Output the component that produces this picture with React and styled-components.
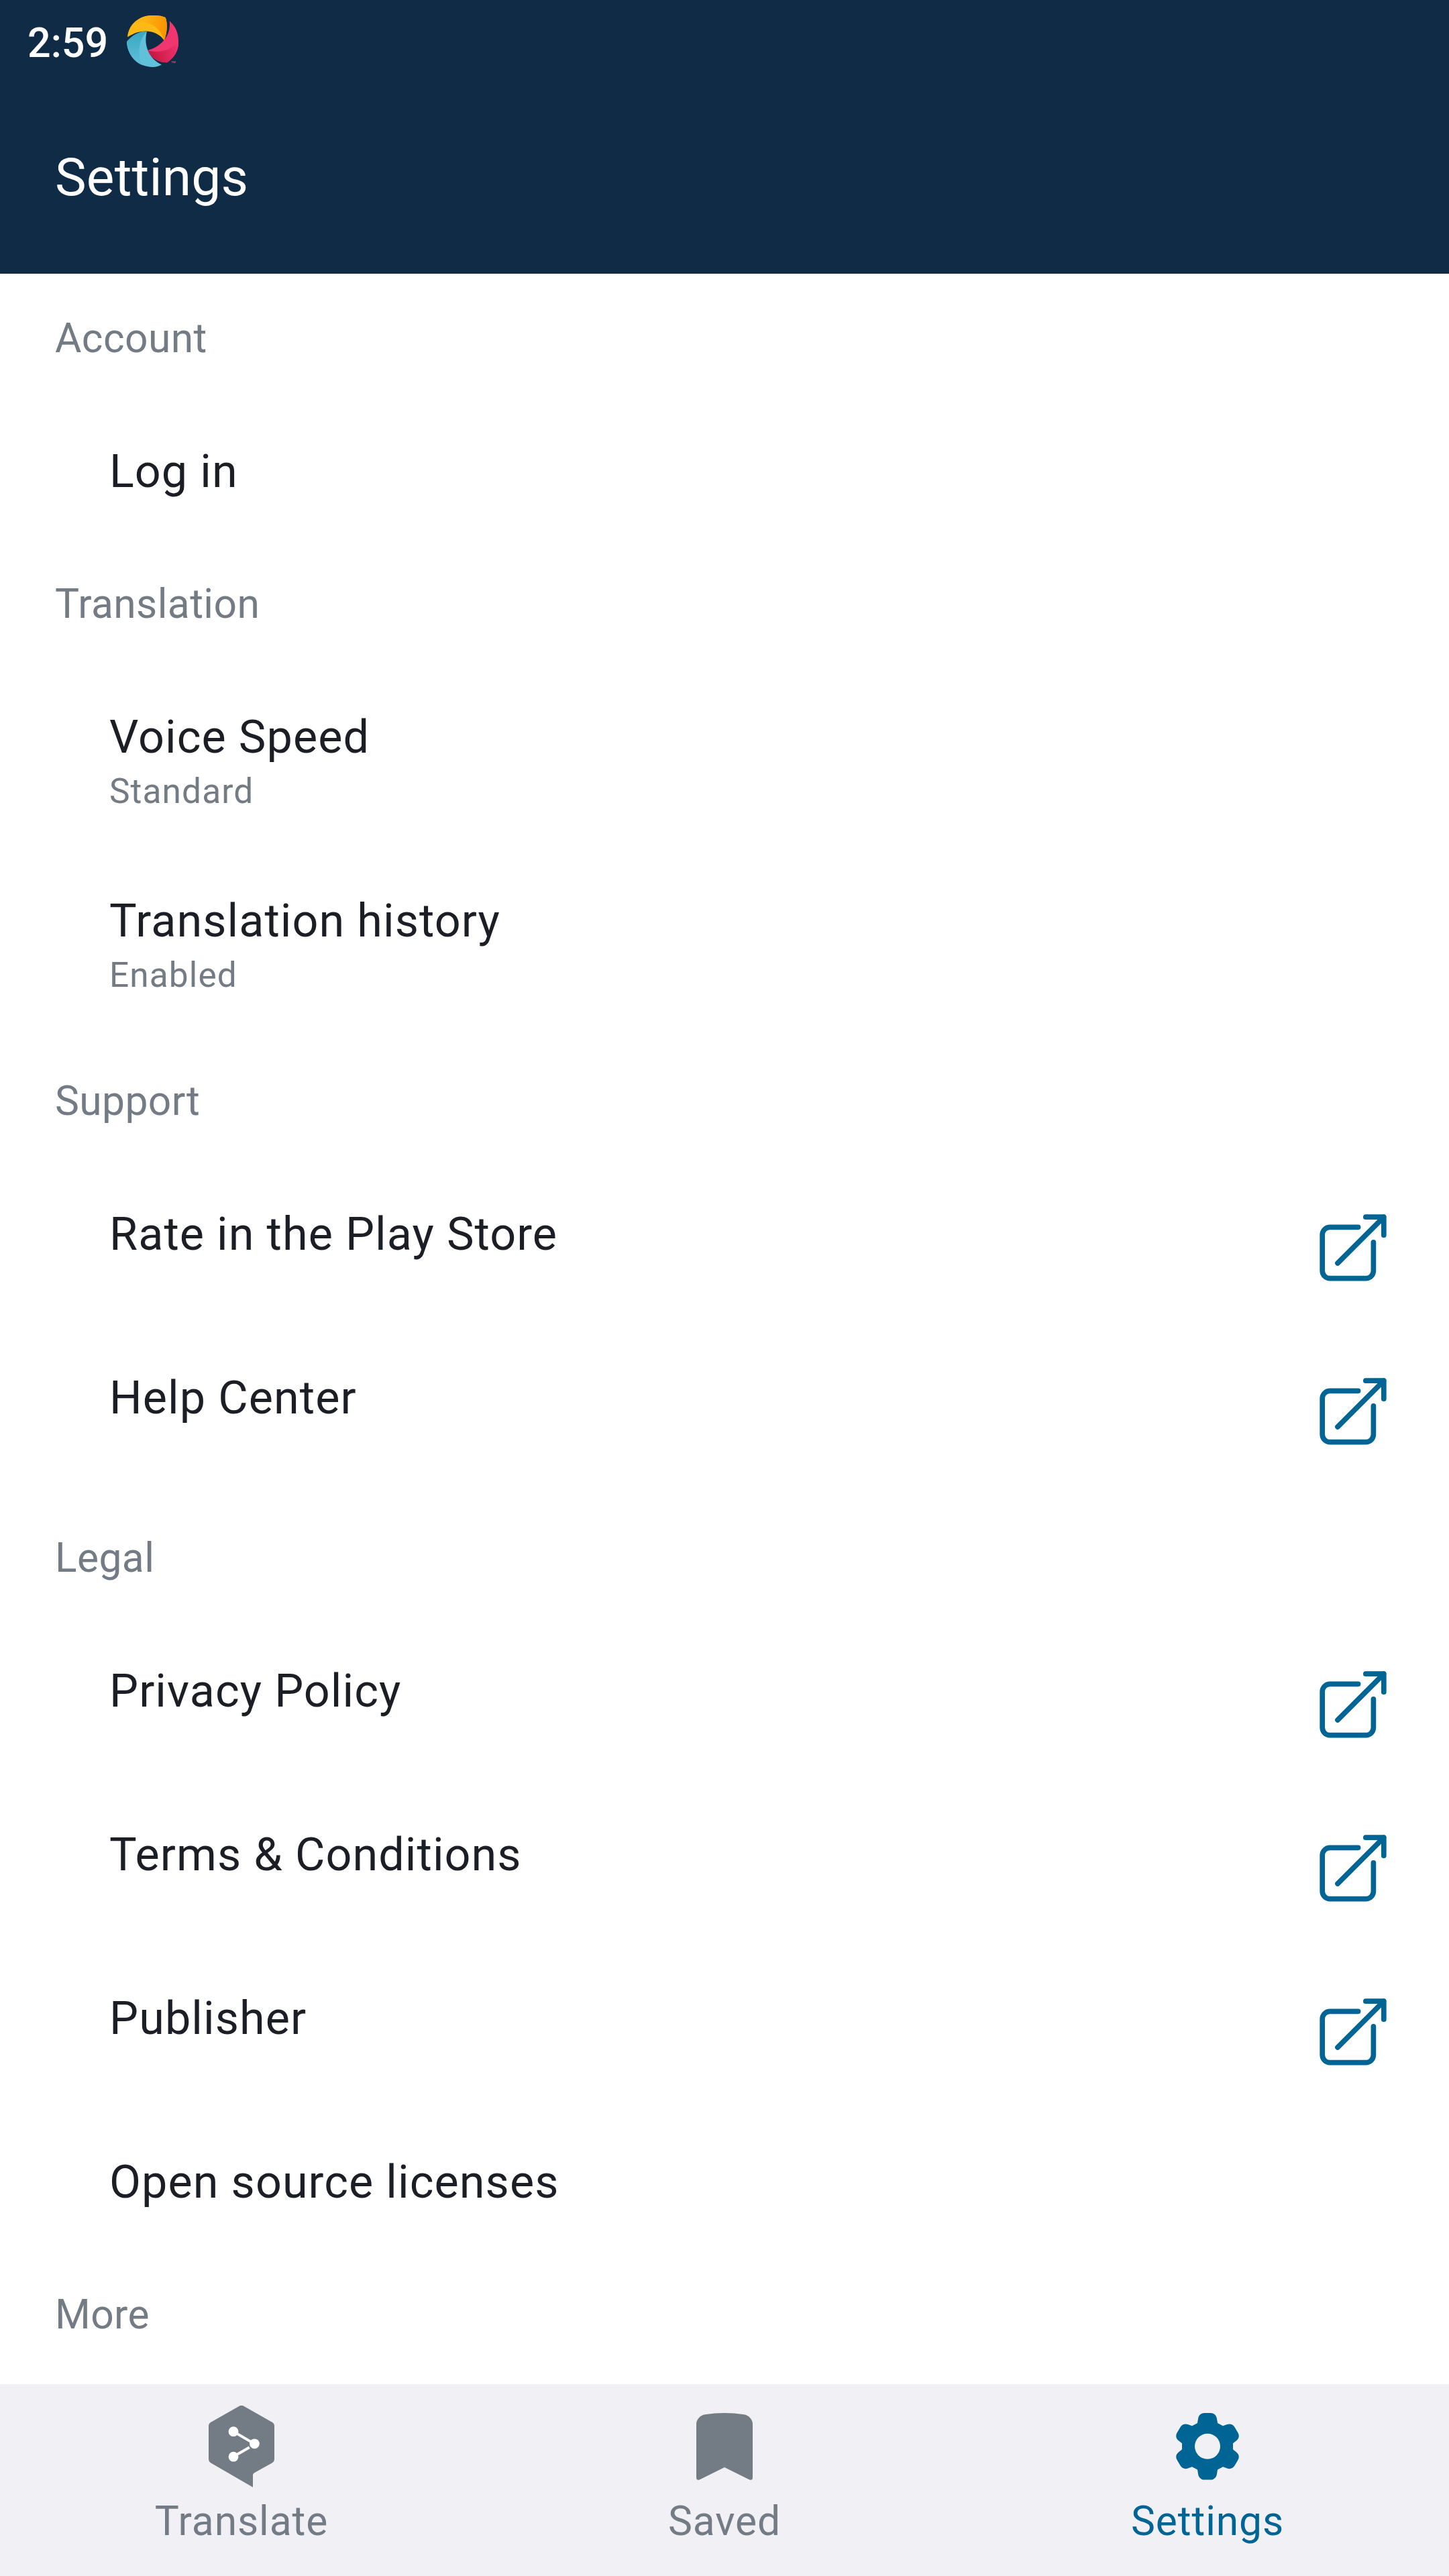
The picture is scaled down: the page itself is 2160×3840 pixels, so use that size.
import React from "react";
import styled, { createGlobalStyle } from "styled-components";

const color = {
  navy: "#0f2b46",
  blue: "#006494",
  grey: "#737b84",
  ink: "#1b1e25",
  bar: "#f1f0f5",
};

const GlobalStyle = createGlobalStyle`
  *, *::before, *::after { box-sizing: border-box; }
  html, body { margin: 0; padding: 0; background: #fff; }
  body { font-family: Roboto, "Noto Sans", sans-serif; }
`;

const Screen = styled.div`
  display: flex;
  flex-direction: column;
  width: 2160px;
  height: 3840px;
  overflow: hidden;
  background: #fff;
`;

const TopBar = styled.header`
  flex: none;
  display: flex;
  flex-direction: column;
  height: 408px;
  background: ${color.navy};
  color: #fff;
`;

const StatusBar = styled.div`
  display: flex;
  align-items: center;
  height: 123px;
  padding-left: 41px;
`;

const Clock = styled.span`
  width: 148px;
  padding-top: 5px;
  font-size: 61px;
  font-weight: 500;
  line-height: 72px;
`;

const Toolbar = styled.div`
  flex: 1;
  display: flex;
  align-items: center;
  padding: 0 82px 3px;
`;

const ScreenTitle = styled.h1`
  margin: 0;
  font-size: 78.5px;
  font-weight: 400;
  line-height: 92px;
  letter-spacing: 0.2px;
`;

const Content = styled.main`
  flex: 1;
  min-height: 0;
  overflow: hidden;
`;

const SectionTitle = styled.h2`
  margin: 0;
  height: 195px;
  padding: 61px 82px 0;
  font-size: 60.5px;
  font-weight: 400;
  line-height: 71px;
  letter-spacing: 0.4px;
  color: ${color.grey};
`;

const List = styled.div`
  display: flex;
  flex-direction: column;
  gap: 2px;
`;

const rowHeights = { compact: 201, regular: 242, detailed: 272 };

const Row = styled.div`
  display: flex;
  justify-content: space-between;
  align-items: flex-start;
  height: ${(p) => rowHeights[p.$size]}px;
  padding: 60px 90px 0 163px;
`;

const RowText = styled.div`
  display: flex;
  flex-direction: column;
  gap: 10px;
`;

const RowTitle = styled.span`
  font-size: 68.3px;
  line-height: 80px;
  letter-spacing: 1.07px;
  color: ${color.ink};
  white-space: nowrap;
`;

const RowDetail = styled.span`
  font-size: 51.4px;
  line-height: 61px;
  letter-spacing: 1.1px;
  color: ${color.grey};
`;

const ExternalSvg = styled.svg`
  flex: none;
  width: 104px;
  height: 104px;
  margin-top: 8px;
  fill: none;
  stroke: ${color.blue};
  stroke-width: 7.7;
  stroke-linecap: round;
  stroke-linejoin: round;
`;

const NavBar = styled.nav`
  flex: none;
  display: grid;
  grid-template-columns: repeat(3, 1fr);
  height: 286px;
  background: ${color.bar};
`;

const NavItem = styled.div`
  display: flex;
  flex-direction: column;
  align-items: center;
  gap: 15px;
  padding-top: 32px;
  color: ${(p) => (p.$active ? color.blue : color.grey)};
`;

const NavSvg = styled.svg`
  width: 122px;
  height: 122px;
  fill: currentColor;
`;

const NavLabel = styled.span`
  font-size: 60.5px;
  line-height: 71px;
  letter-spacing: 0.9px;
`;

const LogoSvg = styled.svg`
  width: 78px;
  height: 78px;
  overflow: visible;
`;

function SwirlLogo() {
  return (
    <LogoSvg viewBox="27 27 234 234">
      <defs>
        <linearGradient id="amber" x1="0.3" x2="1" y1="0" y2="0.1">
          <stop offset="0" stopColor="#fdb515" />
          <stop offset="1" stopColor="#fb9300" />
        </linearGradient>
        <linearGradient id="rose" x1="0" x2="1" y1="0.6" y2="0.3">
          <stop offset="0" stopColor="#c0163b" />
          <stop offset="1" stopColor="#ef336f" />
        </linearGradient>
        <linearGradient id="teal" x1="0.5" x2="0.5" y1="0" y2="1">
          <stop offset="0" stopColor="#3aa6c0" />
          <stop offset="1" stopColor="#61c0da" />
        </linearGradient>
      </defs>
      <path fill="#fdba12" d="M30 124C35 66 82 27 140 27C165 26 188 29 200 37C209 57 210 102 194 139C170 98 100 77 30 124Z" />
      <path fill="url(#amber)" d="M63 63C84 38 112 27 140 27C165 26 188 29 200 37C209 57 210 102 194 139C178 82 128 45 63 63Z" />
      <path fill="#ef366f" d="M218 52C247 76 259 110 258 147C258 187 240 214 207 238C170 239 135 217 118 184C178 168 226 120 218 52Z" />
      <path fill="url(#rose)" d="M258 143C259 187 240 214 207 238C170 239 135 217 118 184C168 196 222 187 258 143Z" />
      <path fill="#62c1da" d="M117 98C81 98 49 116 27 145C30 211 78 257 143 258C158 258 170 255 183 247C128 222 100 162 117 98Z" />
      <path fill="url(#teal)" d="M117 98C81 98 49 116 27 145C29 193 57 233 97 250C72 196 81 136 117 98Z" />
      <text x="225" y="240" fontSize="13" fontFamily="Roboto, sans-serif" fontWeight="700" textLength="20" fill="#ef366f">TM</text>
    </LogoSvg>
  );
}

function ExternalIcon() {
  return (
    <ExternalSvg viewBox="0 0 104 104">
      <path d="M58.6 21.3H16.6A11.4 11.4 0 0 0 5.2 32.7V86.3A11.4 11.4 0 0 0 16.6 97.7H70A11.4 11.4 0 0 0 81.4 86.3V43.8" />
      <path d="M69.8 6.2H96.8V33.2M96.8 6.2L28 75" />
    </ExternalSvg>
  );
}

function TranslateIcon() {
  return (
    <NavSvg viewBox="0 0 122 122">
      <path d="M57.6 0.8Q61 -1.2 64.4 0.8L107 25Q110 27 110 30.5V80Q110 83.3 107 85.2L80 100.3Q78 101.5 78 103.5V121.8L15 85.2Q12 83.3 12 80V30.5Q12 27 15 25Z" />
      <g stroke="#fff" strokeWidth="3.9">
        <path d="M49 38.7L80.3 56.9" />
        <path d="M49 76L72.8 62.2" />
      </g>
      <g fill="#fff">
        <circle cx="49" cy="38.7" r="7.4" />
        <circle cx="80.4" cy="56.8" r="7.4" />
        <circle cx="49" cy="76.2" r="7.4" />
      </g>
    </NavSvg>
  );
}

function SavedIcon() {
  return (
    <NavSvg viewBox="0 0 122 122">
      <path d="M32 13.2Q61 9 90 13.2C97 14.2 103 20.5 103 27.5V107Q103 112 98.3 110.5L61 92L23.7 110.5Q19 112 19 107V27.5C19 20.5 25 14.2 32 13.2Z" />
    </NavSvg>
  );
}

function GearIcon() {
  return (
    <NavSvg viewBox="0 0 122 122">
      <path
        fillRule="evenodd"
        d="M56.3 11H65.7C71 11 74.3 14.8 74.9 19.3L76 26L84 30.3L90.3 28C94.3 26.7 98.9 27.7 101.4 32L106.3 40.3C108.7 44.3 108.2 48.7 104.7 51.7L99 56.3V65.3L104.7 69.9C108.2 72.9 108.7 77.3 106.3 81.3L101.4 89.6C98.9 93.9 94.3 94.9 90.3 93.6L84 91.3L76 95.6L74.9 102.3C74.3 106.8 71 110.6 65.7 110.6H56.3C51 110.6 47.7 106.8 47.1 102.3L46 95.6L38 91.3L31.7 93.6C27.7 94.9 23.1 93.9 20.6 89.6L15.7 81.3C13.3 77.3 13.8 72.9 17.3 69.9L23 65.3V56.3L17.3 51.7C13.8 48.7 13.3 44.3 15.7 40.3L20.6 32C23.1 27.7 27.7 26.7 31.7 28L38 30.3L46 26L47.1 19.3C47.7 14.8 51 11 56.3 11ZM61 41.8A19 19 0 1 0 61 79.8A19 19 0 1 0 61 41.8Z"
      />
    </NavSvg>
  );
}

const sections = [
  { title: "Account", rows: [{ title: "Log in", size: "compact" }] },
  {
    title: "Translation",
    rows: [
      { title: "Voice Speed", detail: "Standard", size: "detailed" },
      { title: "Translation history", detail: "Enabled", size: "detailed" },
    ],
  },
  {
    title: "Support",
    rows: [
      { title: "Rate in the Play Store", size: "regular", external: true },
      { title: "Help Center", size: "regular", external: true },
    ],
  },
  {
    title: "Legal",
    rows: [
      { title: "Privacy Policy", size: "regular", external: true },
      { title: "Terms & Conditions", size: "regular", external: true },
      { title: "Publisher", size: "regular", external: true },
      { title: "Open source licenses", size: "compact" },
    ],
  },
  { title: "More", rows: [] },
];

const tabs = [
  { label: "Translate", Icon: TranslateIcon },
  { label: "Saved", Icon: SavedIcon },
  { label: "Settings", Icon: GearIcon, active: true },
];

export default function App() {
  return (
    <>
      <GlobalStyle />
      <Screen>
        <TopBar>
          <StatusBar>
            <Clock>2:59</Clock>
            <SwirlLogo />
          </StatusBar>
          <Toolbar>
            <ScreenTitle>Settings</ScreenTitle>
          </Toolbar>
        </TopBar>
        <Content>
          {sections.map((section) => (
            <section key={section.title}>
              <SectionTitle>{section.title}</SectionTitle>
              <List>
                {section.rows.map((row) => (
                  <Row key={row.title} $size={row.size}>
                    <RowText>
                      <RowTitle>{row.title}</RowTitle>
                      {row.detail && <RowDetail>{row.detail}</RowDetail>}
                    </RowText>
                    {row.external && <ExternalIcon />}
                  </Row>
                ))}
              </List>
            </section>
          ))}
        </Content>
        <NavBar>
          {tabs.map(({ label, Icon, active }) => (
            <NavItem key={label} $active={active}>
              <Icon />
              <NavLabel>{label}</NavLabel>
            </NavItem>
          ))}
        </NavBar>
      </Screen>
    </>
  );
}
